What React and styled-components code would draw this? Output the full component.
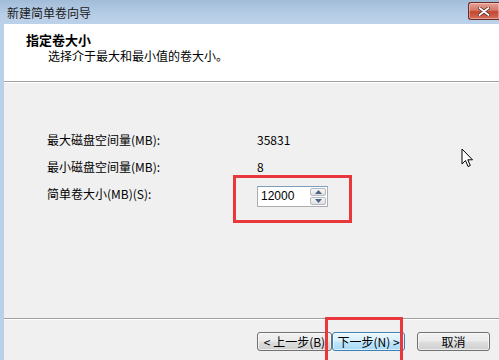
import React from 'react';
import styled, {createGlobalStyle} from 'styled-components';

const Global = createGlobalStyle`
    html, body {
        margin: 0;
        padding: 0;
        background: #f0f0f0;
    }
    body {
        font-family: "Noto Sans CJK SC", "Liberation Sans", sans-serif;
        font-size: 12px;
        color: #000;
    }
`

const Window = styled.div`
    position: relative;
    width: 499px;
    height: 360px;
    overflow: hidden;
    display: flex;
    flex-direction: column;
    background: #f0f0f0;
`

const TitleBar = styled.div`
    height: 24px;
    flex: none;
    display: flex;
    align-items: center;
    justify-content: space-between;
    padding-left: 7px;
    background: linear-gradient(to bottom, #a2bcd8, #b7cde6 60%, #bcd2ea);
    span {
        font-size: 12px;
        line-height: 12px;
        color: #1a1a1a;
        margin-top: 1px;
    }
`

const CloseBtn = styled.div`
    width: 30px;
    height: 16px;
    margin-top: -2px;
    border: 1px solid #6b2c25;
    border-right: none;
    border-radius: 3px 0 0 3px;
    background: linear-gradient(to bottom, #e6a195 0%, #d47868 45%, #c4452f 55%, #d4715e 100%);
    display: flex;
    align-items: center;
    justify-content: center;
    box-shadow: inset 0 0 0 1px rgba(255,255,255,.35);
`

const Frame = styled.div`
    flex: 1;
    display: flex;
    flex-direction: column;
    border-left: 4px solid #bad0e8;
`

const Header = styled.div`
    height: 58px;
    flex: none;
    background: #fff;
    border-bottom: 1px solid #a0a0a0;
    box-shadow: 0 1px 0 #fff;
    padding: 8px 0 0 22px;
    box-sizing: border-box;
    h1 {
        margin: 0;
        font-size: 13px;
        line-height: 16px;
        font-weight: bold;
    }
    p {
        margin: 0 0 0 22px;
        font-size: 12px;
        line-height: 16px;
    }
`

const Body = styled.div`
    flex: 1;
    padding: 44px 0 0 43px;
    display: grid;
    grid-template-columns: 210px auto;
    grid-auto-rows: 27px;
    align-content: start;
    align-items: center;
`

const Label = styled.div`
    line-height: 14px;
`

const Value = styled.div`
    line-height: 14px;
`

const Field = styled.div`
    position: relative;
    width: 71px;
    height: 21px;
    margin-top: 5px;
    box-sizing: border-box;
    border: 1px solid #abadb3;
    border-top-color: #7b9ebd;
    background: #fff;
    display: flex;
    align-items: center;
    input {
        border: none;
        outline: none;
        width: 48px;
        padding: 0 0 0 3px;
        font: 12px "Liberation Sans", sans-serif;
        background: transparent;
    }
`

const Spinner = styled.div`
    margin-left: auto;
    margin-right: 1px;
    width: 16px;
    height: 17px;
    display: flex;
    flex-direction: column;
    gap: 1px;
`

const SpinBtn = styled.div`
    flex: 1;
    border: 1px solid #b4bac2;
    border-radius: 2px;
    background: linear-gradient(to bottom, #f6f6f6, #e0e0e0);
    display: flex;
    align-items: center;
    justify-content: center;
`

const Mark = styled.div`
    position: absolute;
    box-sizing: border-box;
    border: 3px solid #e8383c;
    pointer-events: none;
`

const Footer = styled.div`
    flex: none;
    height: 42px;
    box-sizing: border-box;
    border-top: 1px solid #a0a0a0;
    box-shadow: inset 0 1px 0 #fff;
    display: flex;
    align-items: flex-start;
    padding: 13px 9px 0 253px;
`

const Btn = styled.div`
    position: relative;
    width: ${p => p.w}px;
    height: 19px;
    margin-left: ${p => p.gap || 0}px;
    box-sizing: border-box;
    border: 1px solid ${p => p.primary ? '#3c7fb1' : '#707070'};
    border-radius: 3px;
    background: ${p => p.primary
        ? 'linear-gradient(to bottom, #eaf6fd 0%, #d9f0fc 45%, #bee6fd 55%, #a7d9f5 100%)'
        : 'linear-gradient(to bottom, #f2f2f2 0%, #ebebeb 45%, #dddddd 55%, #cfcfcf 100%)'};
    box-shadow: inset 0 0 0 1px rgba(255,255,255,.6);
    display: flex;
    align-items: center;
    justify-content: center;
    font-size: 12px;
    line-height: 12px;
    white-space: nowrap;
`

const Cursor = styled.svg`
    position: absolute;
    left: 461px;
    top: 148px;
`

export default function App() {
    return (
        <Window>
            <Global />
            <TitleBar>
                <span>新建简单卷向导</span>
                <CloseBtn>
                    <svg width="12" height="9" viewBox="0 0 12 9">
                        <path d="M1.5 1 L10.5 8 M10.5 1 L1.5 8" stroke="#4a2020" strokeWidth="3.2" strokeLinecap="round"/>
                        <path d="M1.5 1 L10.5 8 M10.5 1 L1.5 8" stroke="#fff" strokeWidth="1.8" strokeLinecap="round"/>
                    </svg>
                </CloseBtn>
            </TitleBar>
            <Frame>
                <Header>
                    <h1>指定卷大小</h1>
                    <p>选择介于最大和最小值的卷大小。</p>
                </Header>
                <Body>
                    <Label>最大磁盘空间量(MB):</Label>
                    <Value>35831</Value>
                    <Label>最小磁盘空间量(MB):</Label>
                    <Value>8</Value>
                    <Label>简单卷大小(MB)(S):</Label>
                    <Field>
                        <input defaultValue="12000" />
                        <Spinner>
                            <SpinBtn>
                                <svg width="7" height="4"><path d="M0 4 L3.5 0 L7 4 Z" fill="#4d6185"/></svg>
                            </SpinBtn>
                            <SpinBtn>
                                <svg width="7" height="4"><path d="M0 0 L3.5 4 L7 0 Z" fill="#4d6185"/></svg>
                            </SpinBtn>
                        </Spinner>
                        <Mark style={{left: -25, top: -12, width: 119, height: 48}} />
                    </Field>
                </Body>
                <Footer>
                    <Btn w={75}>&lt; 上一步(B)</Btn>
                    <Btn w={73} primary>
                        下一步(N) &gt;
                        <Mark style={{left: -8, top: -16, width: 78, height: 50}} />
                    </Btn>
                    <Btn w={73} gap={12}>取消</Btn>
                </Footer>
            </Frame>
            <Cursor width="13" height="21" viewBox="0 0 13 21">
                <path d="M1 1 L1 16 L4.5 12.5 L7 18.5 L9.3 17.5 L6.8 11.8 L11.5 11.8 Z" fill="#fff" stroke="#000" strokeWidth="1" strokeLinejoin="round"/>
            </Cursor>
        </Window>
    )
}
